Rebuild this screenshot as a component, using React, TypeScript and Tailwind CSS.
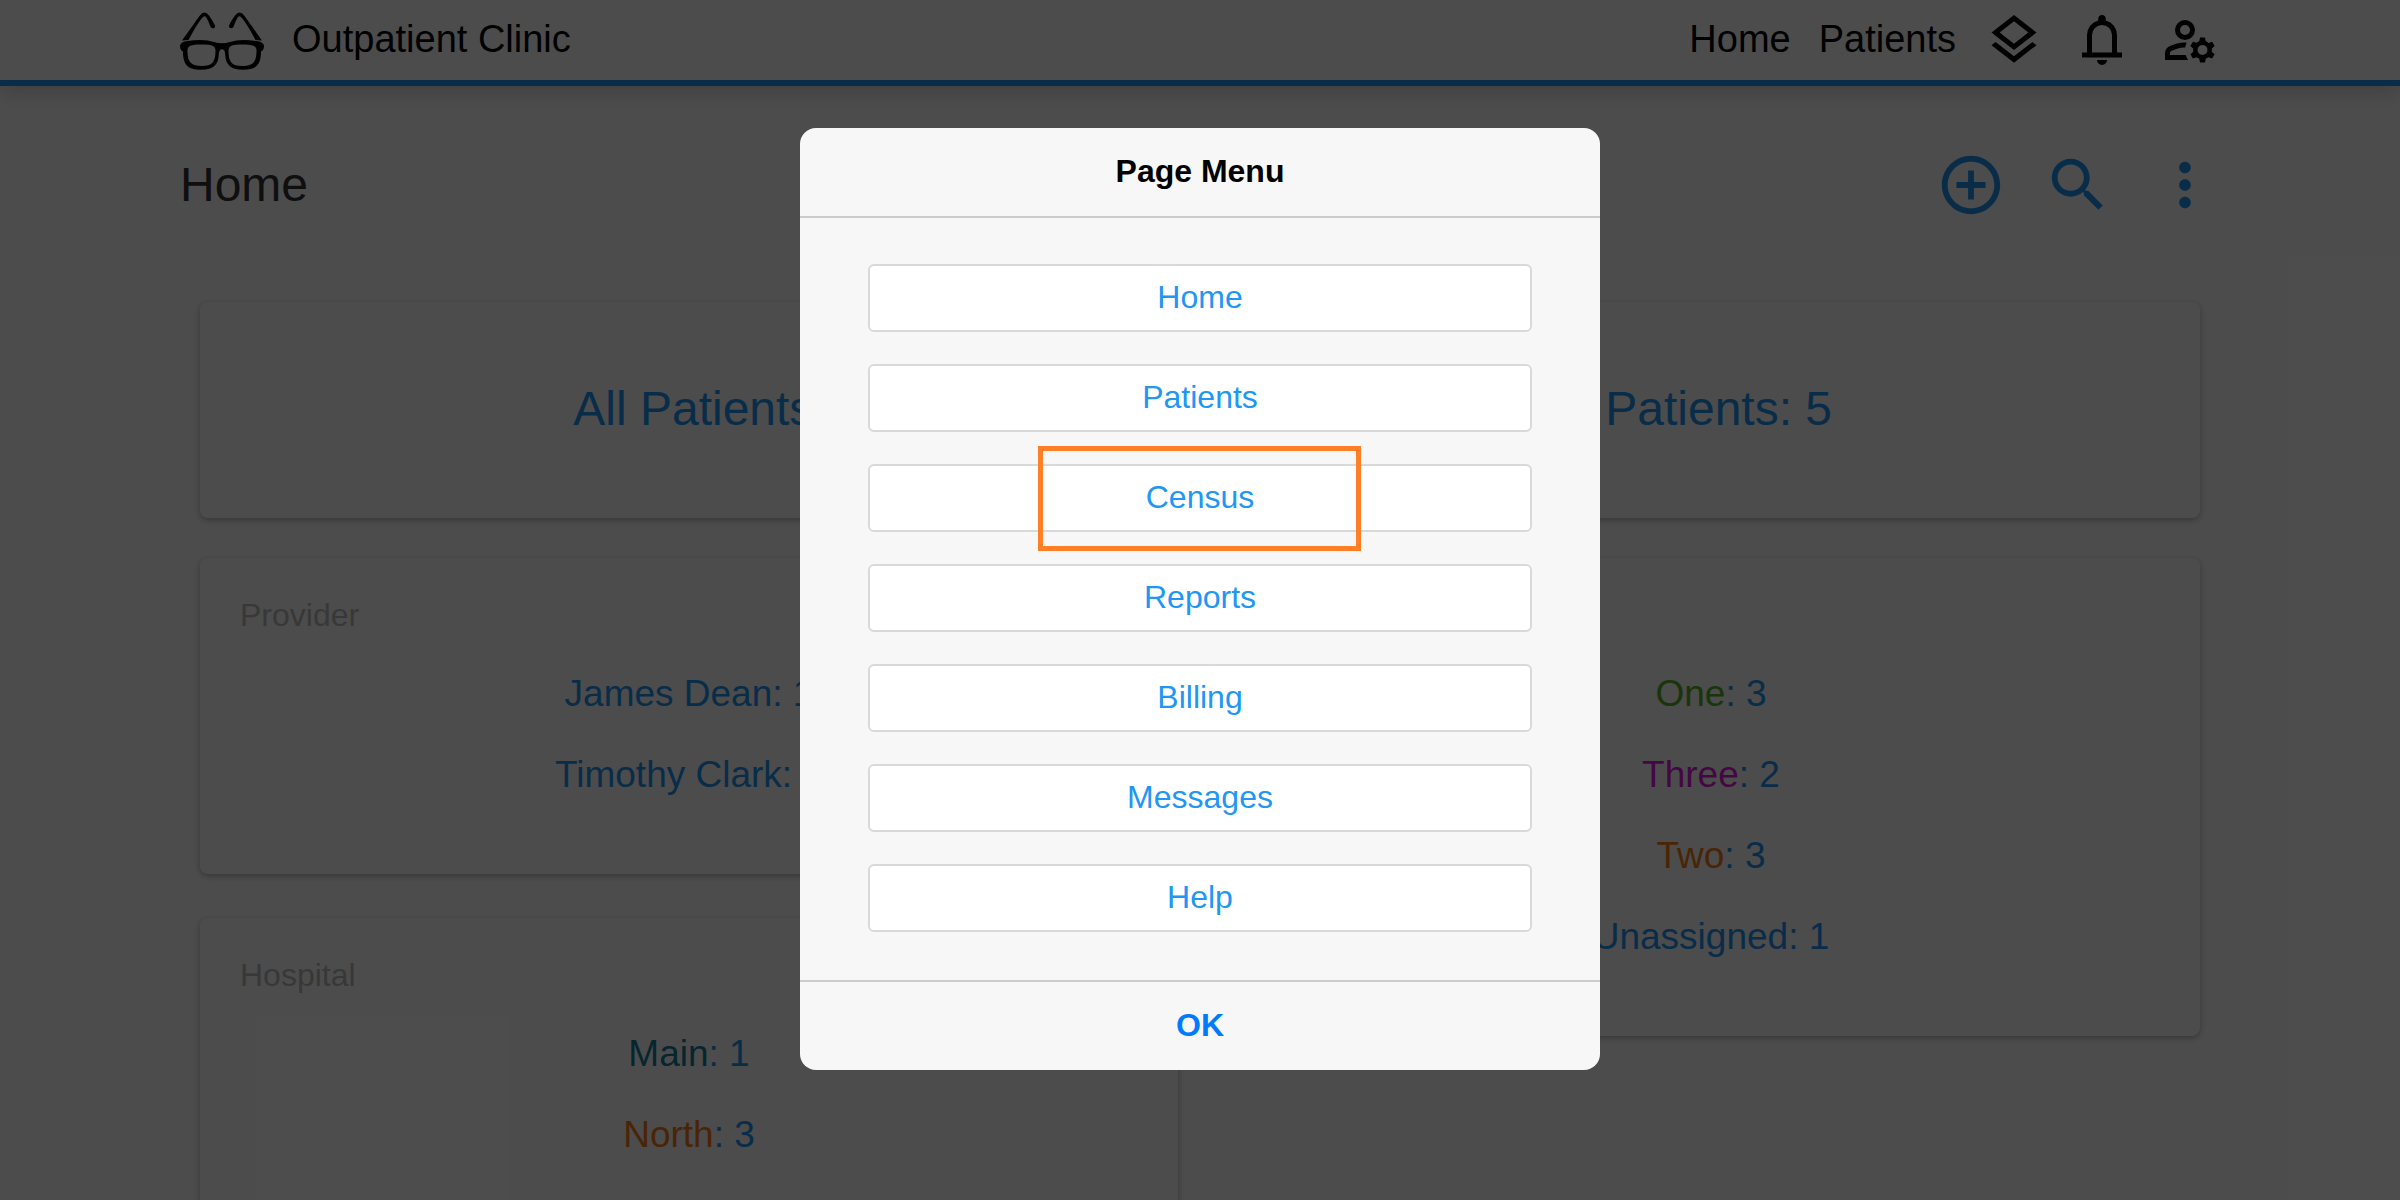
import type { ReactNode } from "react";
import { MdControlPoint, MdMoreVert, MdOutlineLayers, MdSearch } from "react-icons/md";

type Stat = { label: string; value: number; color?: string };

const providers: Stat[] = [
  { label: "James Dean", value: 1 },
  { label: "Timothy Clark", value: 8 },
];

const groups: Stat[] = [
  { label: "One", value: 3, color: "text-[#57b227]" },
  { label: "Three", value: 2, color: "text-[#e018e0]" },
  { label: "Two", value: 3, color: "text-[#f57c17]" },
  { label: "Unassigned", value: 1 },
];

const hospitals: Stat[] = [
  { label: "Main", value: 1, color: "text-[#17809f]" },
  { label: "North", value: 3, color: "text-[#f57c17]" },
];

const menuItems = ["Home", "Patients", "Census", "Reports", "Billing", "Messages", "Help"];

const temple =
  "M2 29.5 L19.5 5 Q24.3 -1.5 29 4.5 Q33 10 35 14.5 Q35.5 17.5 32.5 17.3 Q30.5 17 30 14.5 Q28 9 26 6 Q24.3 4.3 22 7 Q17 13 8.5 29 Z";
const lens = "M7.5 41 C7 35 10 33.5 21 33.5 C32 33.5 35.5 34.5 35.5 40 C35.5 51 32 55 22 55 C11 55 7.8 51 7.5 41 Z";
const frame =
  "M0 34.5 Q1 31 6 30.3 Q24 27.5 34 31 Q42 33.5 50 31 Q60 27.5 78 30.3 Q83 31 84 34.5 Q84 39.5 81 40.5 C81 54 76 58.7 63 58.7 C50 58.7 45.5 53 45.3 44 Q45 38.3 42 38.3 Q39 38.3 38.7 44 C38.5 53 34 58.7 21 58.7 C8 58.7 3 54 3 40.5 Q0 39.5 0 34.5 Z";
const lensRight =
  "M76.5 41 C77 35 74 33.5 63 33.5 C52 33.5 48.5 34.5 48.5 40 C48.5 51 52 55 62 55 C73 55 76.2 51 76.5 41 Z";

function GlassesLogo() {
  return (
    <svg viewBox="0 0 84 58" className="h-[58px] w-[84px] overflow-visible" fill="black" aria-hidden="true">
      <path d={temple} />
      <path d={temple} transform="translate(84 0) scale(-1 1)" />
      <path d={`${frame} ${lens} ${lensRight}`} fillRule="evenodd" />
    </svg>
  );
}

function BellIcon() {
  return (
    <svg viewBox="0 0 24 24" className="size-[60px]" fill="currentColor" aria-hidden="true">
      <path d="M4 19v-2h2v-7q0-2.075 1.25-3.688T10.5 4.2v-.7q0-.625.438-1.062T12 2t1.063.438T13.5 3.5v.7q2 .5 3.25 2.113T18 10v7h2v2H4Zm8 3q-.825 0-1.412-.587T10 20h4q0 .825-.587 1.413T12 22Zm-4-5h8v-7q0-1.65-1.175-2.825T12 6T9.175 7.175T8 10v7Z" />
    </svg>
  );
}

function AccountIcon() {
  return (
    <svg viewBox="0 0 24 24" className="size-[60px]" fill="currentColor" aria-hidden="true">
      <path d="M10 12q-1.65 0-2.825-1.175T6 8t1.175-2.825T10 4t2.825 1.175T14 8t-1.175 2.825T10 12Zm-8 8v-2.8q0-.825.425-1.55t1.175-1.1q1.275-.65 2.875-1.1T10 13h.35q.15 0 .3.05q-.2.45-.338.938T10.1 15H10q-1.775 0-3.187.45t-2.313.9q-.225.125-.363.35T4 17.2v.8h6.3q.15.525.4 1.038t.55.962H2Zm14 1l-.3-1.5q-.3-.125-.562-.263T14.6 18.9l-1.45.45l-1-1.7l1.15-1q-.05-.35-.05-.65t.05-.65l-1.15-1l1-1.7l1.45.45q.275-.2.538-.337t.562-.263L16 11h2l.3 1.5q.3.125.563.275t.537.375l1.45-.5l1 1.75l-1.15 1q.05.3.05.625t-.05.625l1.15 1l-1 1.7l-1.45-.45q-.275.2-.537.338t-.563.262L18 21h-2Zm1-3q.825 0 1.413-.587T19 16t-.587-1.412T17 14t-1.412.588T15 16t.588 1.413T17 18Zm-7-8q.825 0 1.413-.587T12 8t-.587-1.412T10 6t-1.412.588T8 8t.588 1.413T10 10Z" />
    </svg>
  );
}

function Card({ title, children, className = "" }: { title?: string; children: ReactNode; className?: string }) {
  return (
    <section className={`rounded-lg bg-white px-10 shadow-[0_2px_6px_rgba(0,0,0,0.3)] ${className}`}>
      {title && <h2 className="mb-3.5 text-[32px] leading-[48px] text-[#bdbdbd]">{title}</h2>}
      {children}
    </section>
  );
}

function StatList({ stats }: { stats: Stat[] }) {
  return (
    <ul className="text-center text-[37px] leading-[81px]">
      {stats.map((s) => (
        <li key={s.label}>
          <a href="#" className="text-[#2196f3]">
            <span className={s.color}>{s.label}</span>: {s.value}
          </a>
        </li>
      ))}
    </ul>
  );
}

export default function App() {
  return (
    <div className="relative h-screen overflow-hidden bg-white font-['Liberation_Sans',Arial,sans-serif]">
      <header className="border-b-[6px] border-[#2196f3] bg-white shadow-[0_4px_20px_rgba(0,0,0,0.2)]">
        <div className="mx-auto flex h-20 w-[85%] items-center justify-between text-[38px] text-black">
          <a href="#" className="flex items-center gap-7">
            <GlassesLogo />
            <span className="pb-0.5">Outpatient Clinic</span>
          </a>
          <nav className="flex items-center gap-7">
            <a href="#" className="pb-0.5">Home</a>
            <a href="#" className="pb-0.5">Patients</a>
            <button aria-label="Layers"><MdOutlineLayers size={60} /></button>
            <button aria-label="Notifications"><BellIcon /></button>
            <button aria-label="Account settings"><AccountIcon /></button>
          </nav>
        </div>
      </header>

      <main className="mx-auto w-[85%] pt-16">
        <div className="flex items-center justify-between">
          <h1 className="text-[48px] leading-[70px] text-[#333333]">Home</h1>
          <div className="flex gap-[37px] text-[#2196f3]">
            <button aria-label="Add"><MdControlPoint size={70} /></button>
            <button aria-label="Search"><MdSearch size={70} /></button>
            <button aria-label="More"><MdMoreVert size={70} /></button>
          </div>
        </div>

        <div className="mt-[82px] px-5">
          <Card className="mb-10 pb-0.5">
            <div className="grid grid-cols-2 text-center text-[48px] leading-[214px] text-[#2196f3]">
              <a href="#">All Patients: 9</a>
              <a href="#">My Patients: 5</a>
            </div>
          </Card>
          <div className="grid grid-cols-2 items-start gap-x-11">
            <div className="flex flex-col gap-11">
              <Card title="Provider" className="pt-[33px] pb-[59px]">
                <StatList stats={providers} />
              </Card>
              <Card title="Hospital" className="pt-[33px] pb-40">
                <StatList stats={hospitals} />
              </Card>
            </div>
            <Card title="Group" className="pt-[33px] pb-[59px]">
              <StatList stats={groups} />
            </Card>
          </div>
        </div>
      </main>

      <div className="absolute inset-0 flex items-center justify-center bg-black/70 pb-0.5">
        <div
          role="dialog"
          aria-modal="true"
          aria-labelledby="page-menu-title"
          className="w-1/3 overflow-hidden rounded-2xl bg-[#f7f7f7] text-center text-[32px]"
        >
          <h2 id="page-menu-title" className="border-b-2 border-[#cccccc] pb-0.5 font-bold leading-[86px] text-black">
            Page Menu
          </h2>
          <div className="flex flex-col gap-8 px-[68px] pt-[46px] pb-12">
            {menuItems.map((item) => (
              <div key={item} className="relative">
                <button className="block w-full rounded-md border-2 border-[#d9d9d9] bg-white pb-0.5 leading-[62px] text-[#2196f3]">
                  {item}
                </button>
                {item === "Census" && (
                  <div className="pointer-events-none absolute -top-[18px] right-[171px] -bottom-[19px] left-[170px] border-[5px] border-[#ff7f27]" />
                )}
              </div>
            ))}
          </div>
          <button className="block w-full border-t-2 border-[#cccccc] pb-0.5 font-bold leading-[86px] text-[#007aff]">
            OK
          </button>
        </div>
      </div>
    </div>
  );
}
